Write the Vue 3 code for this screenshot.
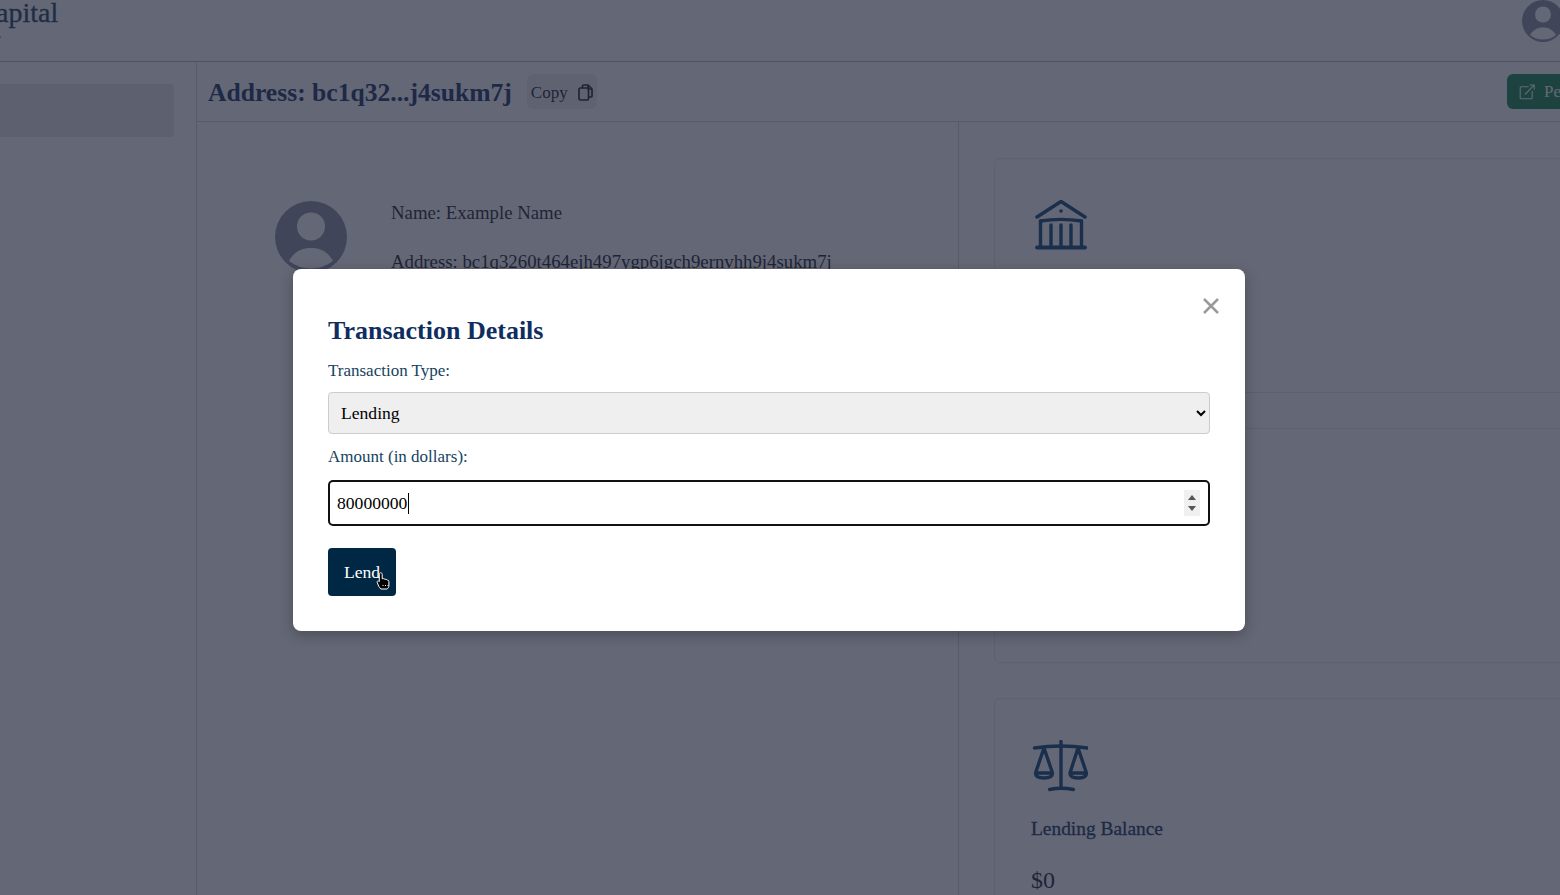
<script setup>
import { onMounted, ref } from 'vue'

const amount = ref(null)
onMounted(() => {
  if (amount.value) amount.value.focus()
})
</script>

<template>
  <div class="page">
    <header class="topbar">
      <div class="brand">
        <span class="brand-name">apital</span>
        <span class="brand-sub">.</span>
      </div>
      <svg class="top-avatar" viewBox="0 0 42 42" width="42" height="42">
        <circle cx="21" cy="21" r="21" fill="#8b93a5" />
        <circle cx="21" cy="14.500" r="8" fill="#fff" />
        <path d="M8 35C11 30 15 27.500 21 27.500S31 30 34 35A21 21 0 0 1 8 35Z" fill="#fff" />
      </svg>
    </header>

    <div class="body">
      <aside class="sidebar">
        <div class="side-active"></div>
      </aside>

      <main class="content">
        <div class="title-bar">
          <h1 class="address-title">Address: bc1q32...j4sukm7j</h1>
          <button class="copy-btn" type="button">
            <span>Copy</span>
            <svg viewBox="0 0 15 17" width="15" height="17" fill="none" stroke="#1f2735" stroke-width="1.700" stroke-linejoin="round">
              <path d="M4.500 4V2a1 1 0 0 1 1-1H10l4 4v7a1 1 0 0 1-1 1h-2.500" />
              <path d="M10 1v3.500a.5.500 0 0 0 .5.500H14" />
              <rect x="1" y="4" width="9.500" height="12" rx="1.300" />
            </svg>
          </button>
          <button class="green-btn" type="button">
            <svg viewBox="0 0 16 16" width="16" height="16" fill="none" stroke="#fff" stroke-width="1.100">
              <path d="M9.500 2.800H2.200a1 1 0 0 0-1 1v10a1 1 0 0 0 1 1h10a1 1 0 0 0 1-1V7" />
              <path d="M6 10.500 15 1.200M10.500 1h4.700v4.700" />
            </svg>
            <span>Perform</span>
          </button>
        </div>

        <div class="columns">
          <section class="profile">
            <svg class="profile-avatar" viewBox="0 0 72 72" width="72" height="72">
              <circle cx="36" cy="36" r="36" fill="#8b93a5" />
              <circle cx="36" cy="25.500" r="14" fill="#fff" />
              <path d="M14 60C19 51 26 47 36 47S53 51 58 60A36 36 0 0 1 14 60Z" fill="#fff" />
            </svg>
            <div class="profile-text">
              <p>Name: Example Name</p>
              <p>Address: bc1q3260t464ejh497ygp6jgch9ernvhh9j4sukm7j</p>
            </div>
          </section>

          <section class="cards">
            <article class="card">
              <svg class="card-icon" viewBox="0 0 52 52" width="52" height="52" fill="none" stroke="#124a7c" stroke-width="3.400" stroke-linecap="round" stroke-linejoin="round">
                <path d="M2 17 26 1.500 50 17" />
                <circle cx="26" cy="11" r="1.800" fill="#124a7c" stroke="none" />
                <path d="M5.500 21C18 19 34 19 46.500 21" />
                <path d="M5.500 21v26M46.500 21v26M16 25v22M26 25v22M36 25v22" />
                <path d="M2 47.500h48" stroke-width="3.800" />
              </svg>
            </article>
            <article class="card"></article>
            <article class="card">
              <svg class="card-icon" viewBox="0 0 56 52" width="56" height="52" fill="none" stroke="#124a7c" stroke-width="3.400" stroke-linecap="round" stroke-linejoin="round">
                <path d="M2.500 8Q29 4 55.500 8" />
                <path d="M29 1.500V48" />
                <path d="M17.500 49.500Q29 47 41.500 49.500" />
                <path d="M12 8 3.500 33C3.500 37 8 38 12 38S20.500 37 20.500 33ZM3.500 33h17" />
                <path d="M46 8 38 33C38 37 42 38 46 38S54.500 37 54.500 33ZM38 33h16.500" />
              </svg>
              <h3 class="card-title">Lending Balance</h3>
              <p class="card-value">$0</p>
            </article>
          </section>
        </div>
      </main>
    </div>

    <div class="overlay">
      <div class="modal">
        <button class="close" type="button" aria-label="Close">
          <svg viewBox="0 0 16 16" width="16" height="16" stroke="#9a9a9a" stroke-width="2.500" fill="none">
            <path d="M1 1 15 15M15 1 1 15" />
          </svg>
        </button>
        <h2 class="modal-title">Transaction Details</h2>
        <label class="field-label" for="type">Transaction Type:</label>
        <select id="type" class="type-select">
          <option>Lending</option>
          <option>Borrowing</option>
        </select>
        <label class="field-label" for="amount">Amount (in dollars):</label>
        <input id="amount" ref="amount" class="amount-input" type="number" value="80000000" />
        <span class="caret"></span>
        <span class="spin"><i class="up"></i><i class="down"></i></span>
        <button class="lend-btn" type="button">Lend</button>
        <svg class="pointer" viewBox="0 0 15 18" width="15" height="18">
          <path d="M4.700 .8c.9 0 1.500.6 1.500 1.500v4.500l.6-.2c.6-.1 1.100.1 1.400.5.600-.3 1.300-.1 1.600.4.700-.2 1.400.1 1.700.7.700-.1 1.400.4 1.400 1.200v3.800c0 1.600-.7 3.300-2 3.800H4.800c-.8-.6-1.300-1.800-2.100-2.800L1.300 10.700c-.5-.8 0-1.700.9-1.700.5 0 .9.300 1.100.6V2.300c0-.9.600-1.500 1.400-1.500Z" fill="#000" stroke="#fff" stroke-width="1" />
          <path d="M6.500 13.500h1M9 13.500h1M11.500 13.500h1" stroke="#fff" stroke-width="1" />
        </svg>
      </div>
    </div>
  </div>
</template>

<style>
html, body {
  margin: 0;
  overflow: hidden;
  background: #fff;
}
</style>

<style scoped>
.page {
  position: relative;
  width: 1560px;
  height: 895px;
  overflow: hidden;
  font-family: "Liberation Serif", serif;
  color: #1f2937;
}
.topbar {
  height: 61px;
  border-bottom: 1px solid #b8bdc7;
  display: flex;
  justify-content: space-between;
}
.brand {
  display: flex;
  flex-direction: column;
  margin: -4px 0 0 -4px;
}
.brand-name {
  font-size: 28px;
  line-height: 34px;
  color: #1e4466;
  -webkit-text-stroke: 0.3px #1e4466;
}
.brand-sub {
  font-size: 14px;
  line-height: 8px;
  margin-left: 2px;
  color: #1e4466;
}
.top-avatar {
  margin-right: -4px;
}
.body {
  display: flex;
  height: 833px;
}
.sidebar {
  width: 196px;
  flex: none;
  border-right: 1px solid #d1d5db;
  padding-top: 22px;
}
.side-active {
  width: 174px;
  height: 53px;
  background: #e5e7eb;
  border-radius: 0 4px 4px 0;
}
.content {
  flex: 1;
  min-width: 0;
}
.title-bar {
  height: 59px;
  border-bottom: 1px solid #d1d5db;
  display: flex;
  align-items: center;
  padding-left: 11px;
}
.address-title {
  margin: 2px 0 0;
  font-size: 25.600px;
  font-weight: 700;
  color: #1a3768;
  white-space: nowrap;
}
.copy-btn {
  margin-left: 15px;
  height: 35px;
  width: 70px;
  display: flex;
  align-items: center;
  gap: 10px;
  border: 0;
  border-radius: 6px;
  background: #eff0f3;
  font: 17px "Liberation Serif", serif;
  color: #1f2937;
  padding: 2px 0 0 4px;
}
.green-btn {
  margin-left: auto;
  margin-right: -90px;
  width: 143px;
  height: 35px;
  display: flex;
  align-items: center;
  gap: 9px;
  padding: 0 12px;
  border: 0;
  border-radius: 6px;
  background: #1a8a55;
  color: #fff;
  font: 17px "Liberation Serif", serif;
}
.columns {
  display: flex;
  height: 773px;
}
.profile {
  width: 762px;
  flex: none;
  box-sizing: border-box;
  border-right: 1px solid #d1d5db;
  padding: 79px 0 0 78px;
  display: flex;
  gap: 44px;
}
.profile-avatar {
  flex: none;
}
.profile-text {
  margin-top: 1px;
}
.profile-text p {
  margin: 0 0 27px;
  font-size: 18.800px;
  line-height: 22px;
  white-space: nowrap;
}
.cards {
  flex: 1;
  min-width: 0;
  padding: 36px 0 0 35px;
  display: flex;
  flex-direction: column;
  gap: 35px;
}
.card {
  flex: none;
  height: 235px;
  width: 640px;
  box-sizing: border-box;
  border: 1px solid #e5e7eb;
  border-radius: 6px;
  padding: 41px 0 0 36px;
}
.card-icon {
  display: block;
  margin-left: 4px;
}
.card-icon[width="56"] {
  margin-left: 1px;
}
.card-title {
  margin: 25px 0 0;
  font-size: 19.400px;
  font-weight: 400;
  color: #1a3768;
  line-height: 24px;
  -webkit-text-stroke: 0.3px #1a3768;
}
.card-value {
  margin: 25px 0 0;
  font-size: 24px;
  line-height: 28px;
}
.overlay {
  position: absolute;
  inset: 0;
  background: rgba(31, 35, 55, 0.69);
}
.modal {
  position: absolute;
  left: 293px;
  top: 269px;
  width: 952px;
  height: 362px;
  box-sizing: border-box;
  background: #fff;
  border-radius: 8px;
  padding: 45px 35px 0;
  box-shadow: 0 4px 14px rgba(0, 0, 0, 0.25);
}
.close {
  position: absolute;
  top: 29px;
  right: 26px;
  padding: 0;
  border: 0;
  background: none;
  line-height: 0;
}
.modal-title {
  margin: 0;
  font-size: 26px;
  line-height: 34px;
  color: #0f2e5f;
  font-weight: 700;
}
.field-label {
  display: block;
  margin-top: 12px;
  font-size: 17px;
  line-height: 22px;
  color: #154360;
}
.type-select {
  display: block;
  width: 100%;
  height: 42px;
  margin-top: 10px;
  box-sizing: border-box;
  padding: 0 8px;
  border: 1px solid #ccc;
  border-radius: 4px;
  background: #efefef;
  font: 17.600px "Liberation Serif", serif;
  color: #000;
}
.amount-input {
  display: block;
  width: 100%;
  height: 46px;
  margin-top: 12px;
  box-sizing: border-box;
  padding: 0 7px;
  border: 2px solid #111;
  border-radius: 5px;
  outline: none;
  background: #fff;
  font: 17.600px "Liberation Serif", serif;
  color: #000;
  caret-color: transparent;
  appearance: textfield;
}
.amount-input::-webkit-inner-spin-button {
  display: none;
}
.caret {
  position: absolute;
  left: 115px;
  top: 224px;
  width: 1px;
  height: 21px;
  background: #000;
}
.spin {
  position: absolute;
  left: 891px;
  top: 221px;
  width: 16px;
  height: 26px;
  background: #f0f0f0;
  display: flex;
  flex-direction: column;
  align-items: center;
  justify-content: center;
  gap: 6px;
}
.spin i {
  display: block;
  width: 0;
  height: 0;
  border-left: 4px solid transparent;
  border-right: 4px solid transparent;
}
.spin .up {
  border-bottom: 5px solid #555;
}
.spin .down {
  border-top: 5px solid #555;
}
.lend-btn {
  display: block;
  width: 68px;
  height: 48px;
  margin-top: 22px;
  border: 0;
  border-radius: 4px;
  background: #002744;
  color: #fff;
  font: 17.600px "Liberation Serif", serif;
  padding: 0;
}
.pointer {
  position: absolute;
  left: 83px;
  top: 303px;
}
</style>
